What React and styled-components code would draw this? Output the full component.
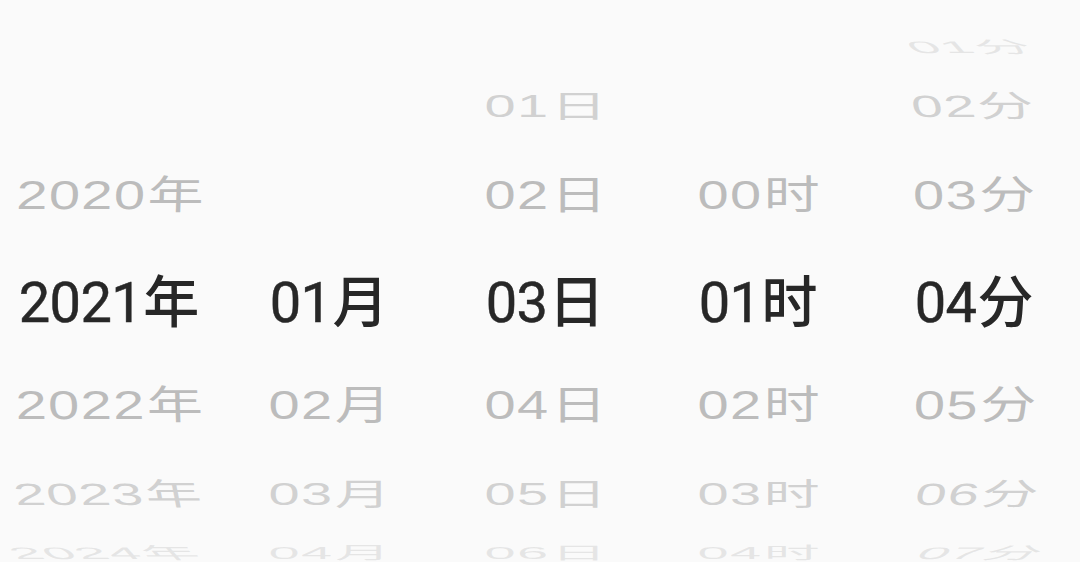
import React from "react";
import styled, { createGlobalStyle } from "styled-components";

const GlobalStyle = createGlobalStyle`
  html, body {
    margin: 0;
    padding: 0;
    background: #fafafa;
  }
  body {
    overflow: hidden;
  }
`;

const FONT_SIZE = 56;
const WHEEL_CENTER = 300; // y of the wheel axis, px
const RADIUS = 274; // radius of the wheel, px
const STEP = Math.PI / 8; // 22.5deg between two items
const OUT_BASELINE = 47.4; // baseline of an outer item in its 56px box
const OUT_HALF_DIGIT = 20.05; // half height of a digit (outer font)
const CENTER_TOP = 274.8; // top of the selected item's box

const Picker = styled.div`
  display: grid;
  grid-template-columns: repeat(5, 1fr);
  width: 1080px;
  height: 562px;
  overflow: hidden;
  background: #fafafa;
`;

const Wheel = styled.div`
  position: relative;
  height: 100%;
`;

const Item = styled.div`
  position: absolute;
  left: ${(p) => p.$shift}px;
  right: ${(p) => -p.$shift}px;
  top: 0;
  height: ${FONT_SIZE}px;
  line-height: ${FONT_SIZE}px;
  font-size: ${FONT_SIZE}px;
  text-align: center;
  white-space: nowrap;
  font-family: ${(p) =>
    p.$selected
      ? `Roboto, "Noto Sans CJK SC", sans-serif`
      : `"Liberation Sans", "Noto Sans CJK SC", sans-serif`};
  letter-spacing: ${(p) => (p.$selected ? "-0.6px" : "1.3px")};
  text-indent: ${(p) => (p.$selected ? "0" : "1.3px")};
  color: ${(p) => (p.$selected ? "#272727" : "#a8a8a8")};
  -webkit-text-stroke: ${(p) => (p.$selected ? "0.5px #272727" : "0")};
  transform-origin: 50% ${OUT_BASELINE}px;
  user-select: none;
`;

const Unit = styled.span`
  font-weight: ${(p) => (p.$selected ? 500 : 400)};
  letter-spacing: 0;
  margin-left: ${(p) => (p.$selected ? "1px" : "1.3px")};
  -webkit-text-stroke: 0;
`;

const pad = (n) => String(n).padStart(2, "0");

const range = (from, to, fmt) => {
  const out = [];
  for (let i = from; i <= to; i++) out.push(fmt(i));
  return out;
};

const columns = [
  { id: "year", unit: "年", items: range(2020, 2030, String), selected: 1, skew: 1, shift: 1 },
  { id: "month", unit: "月", items: range(1, 12, pad), selected: 0, skew: 0, shift: 5 },
  { id: "day", unit: "日", items: range(1, 31, pad), selected: 2, skew: 0, shift: 5 },
  { id: "hour", unit: "时", items: range(0, 23, pad), selected: 1, skew: 0, shift: 2 },
  { id: "minute", unit: "分", items: range(0, 59, pad), selected: 4, skew: -1, shift: 2 },
];

const outerScale = (k) => 0.775 * Math.cos(Math.abs(k) * STEP);

function WheelColumn({ items, unit, selected, skew, shift }) {
  const visible = [];
  for (let k = -3; k <= 3; k++) {
    const idx = selected + k;
    if (idx < 0 || idx >= items.length) continue;
    visible.push({ k, value: items[idx] });
  }
  return (
    <Wheel>
      {visible.map(({ k, value }) => {
        if (k === 0) {
          return (
            <Item
              key={value}
              $selected
              $shift={shift}
              style={{ transform: `translateY(${CENTER_TOP}px)` }}
            >
              {value}
              <Unit $selected>{unit}</Unit>
            </Item>
          );
        }
        const angle = Math.abs(k) * 22.5;
        const s = outerScale(k);
        const yc = WHEEL_CENTER + RADIUS * Math.sin(k * STEP);
        const top = yc - OUT_BASELINE + OUT_HALF_DIGIT * s;
        const coef = Math.pow(angle / 90, 2.2);
        const skewVal = skew * (k > 0 ? 1 : -1) * 0.5 * coef;
        const skewDeg = (Math.atan(skewVal) * 180) / Math.PI;
        const alpha = (90 - angle) / 90;
        return (
          <Item
            key={value}
            $shift={shift}
            style={{
              transform: `translateY(${top}px) scaleY(${s}) skewX(${skewDeg}deg)`,
              color: `rgba(168, 168, 168, ${alpha})`,
            }}
          >
            {value}
            <Unit>{unit}</Unit>
          </Item>
        );
      })}
    </Wheel>
  );
}

export default function App() {
  return (
    <>
      <GlobalStyle />
      <Picker>
        {columns.map((c) => (
          <WheelColumn
            key={c.id}
            items={c.items}
            unit={c.unit}
            selected={c.selected}
            skew={c.skew}
            shift={c.shift}
          />
        ))}
      </Picker>
    </>
  );
}
